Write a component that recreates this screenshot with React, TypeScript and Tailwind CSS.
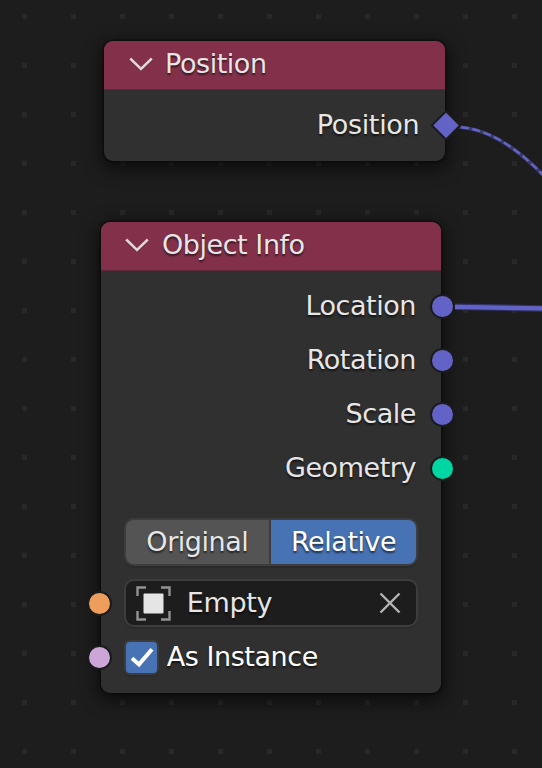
import type { ReactNode } from "react";

const TEXT_SHADOW = "[text-shadow:0_2px_2px_rgba(0,0,0,0.6)]";

function Chevron() {
  return (
    <svg width="24" height="14" viewBox="0 0 24 14" fill="none" className="shrink-0">
      <path d="M1.2 2.2 L12 12.8 L22.8 2.2" stroke="#000" strokeOpacity="0.15" strokeWidth="3.4" />
      <path d="M1.2 1.5 L12 12 L22.8 1.5" stroke="#e0d5d9" strokeWidth="2.5" />
    </svg>
  );
}

function NodeHeader({ title, inset }: { title: string; inset: string }) {
  return (
    <header className={`flex h-[48.5px] items-center rounded-t-[9px] border-b border-[#5a2638] bg-[#83314a] pb-px ${inset}`}>
      <Chevron />
      <h2 className={`whitespace-pre ${TEXT_SHADOW}`}>{title}</h2>
    </header>
  );
}

function Node({ className, children }: { className: string; children: ReactNode }) {
  return (
    <section
      className={`absolute rounded-[9px] bg-[#303030] shadow-[0_0_0_1.5px_rgba(10,10,10,0.55),0_5px_17px_3px_rgba(0,0,0,0.6)] ${className}`}
    >
      {children}
    </section>
  );
}

function Socket({ className }: { className: string }) {
  return <span className={`absolute size-[25px] rounded-full border-2 border-[#1b1b1b] ${className}`} />;
}

function Output({ label, color }: { label: string; color: string }) {
  return (
    <div className="relative flex h-[54px] items-center justify-end pr-[25.4px]">
      <span className={TEXT_SHADOW}>{label}</span>
      <Socket className={`-right-[13.5px] top-[15px] ${color}`} />
    </div>
  );
}

export default function App() {
  return (
    <main className="relative h-[768px] w-[542px] overflow-hidden bg-[#1d1d1d] font-['DejaVu_Sans',sans-serif] text-[27px] leading-[32px] tracking-[-0.45px] text-[#e6e6e6]">
      <svg className="absolute inset-0" width="542" height="768">
        <defs>
          <pattern id="grid" x="22" y="14" width="49" height="49" patternUnits="userSpaceOnUse">
            <rect width="5" height="5" fill="#282828" />
          </pattern>
        </defs>
        <rect width="542" height="768" fill="url(#grid)" />
      </svg>

      <Node className="left-[104.4px] top-[41px] h-[120px] w-[340.6px]">
        <NodeHeader title="Position" inset="gap-[12.2px] pl-[24.5px]" />
        <div className="flex h-[70px] items-center justify-end pr-[25.6px]">
          <span className={`tracking-[-0.3px] ${TEXT_SHADOW}`}>Position</span>
        </div>
      </Node>

      <Node className="left-[101px] top-[222px] h-[470.5px] w-[340.4px]">
        <NodeHeader title="Object Info" inset="gap-[13px] pl-[24px]" />
        <div className="pt-[8px]">
          <Output label="Location" color="bg-[#6363c7]" />
          <Output label="Rotation" color="bg-[#6363c7]" />
          <Output label="Scale" color="bg-[#6363c7]" />
          <Output label="Geometry" color="bg-[#00d6a3]" />
        </div>
        <div className="flex flex-col pl-[23.4px] pr-[23.5px] pt-[23.5px]">
          <div className="flex h-[48px] overflow-hidden rounded-[10px] border-2 border-[#3d3d3d] bg-[#3d3d3d] shadow-[0_2px_0_rgba(0,0,0,0.1)]">
            <button className={`w-[143px] bg-[#545454] pb-px pr-px ${TEXT_SHADOW}`}>Original</button>
            <button className={`ml-[2px] flex-1 bg-[#4772b3] pb-px text-white ${TEXT_SHADOW}`}>Relative</button>
          </div>
          <div className="relative mt-[13px] flex h-[48px] items-center rounded-[10px] border-2 border-[#3d3d3d] bg-[#1d1d1d] pl-[9.5px] pr-[15px] shadow-[0_2px_0_rgba(0,0,0,0.1)]">
            <svg width="35" height="35" viewBox="0 0 35 35" fill="none">
              <path d="M1.5 10V1.5H10M25 1.5H33.5V10M33.5 25V33.5H25M10 33.5H1.5V25" stroke="#939393" strokeWidth="2.4" />
              <rect x="7.5" y="7.5" width="20" height="20" rx="1" fill="#e5e5e5" />
            </svg>
            <span className={`ml-[15.8px] flex-1 tracking-[-0.3px] ${TEXT_SHADOW}`}>Empty</span>
            <svg width="22" height="22" viewBox="0 0 22 22" fill="none">
              <path d="M1.5 1.5L20.5 20.5M20.5 1.5L1.5 20.5" stroke="#b4b4b4" strokeWidth="2.4" />
            </svg>
            <Socket className="-left-[39.3px] top-[9.5px] bg-[#ed9e5c]" />
          </div>
          <div className="relative mt-[12.5px] flex h-[35px] items-center gap-[7.4px]">
            <span className="flex size-[35px] items-center justify-center rounded-[6px] border-2 border-[#3d3d3d] bg-[#4772b3] shadow-[0_2px_0_rgba(0,0,0,0.1)]">
              <svg width="31" height="31" viewBox="0 0 31 31" fill="none" className="shrink-0">
                <path d="M6 16.2L13 22.4L26 7.2" stroke="white" strokeWidth="4" />
              </svg>
            </span>
            <span className={`text-white ${TEXT_SHADOW}`}>As Instance</span>
            <Socket className="-left-[37.3px] top-[5px] bg-[#cca6d6]" />
          </div>
        </div>
      </Node>

      <svg className="absolute inset-0" width="542" height="768" fill="none">
        <path d="M455 306.8L542 308.4" stroke="#34346a" strokeWidth="6.5" />
        <path d="M455 306.8L542 308.4" stroke="#6363c7" strokeWidth="4.2" />
        <path d="M459 127C486 129 514 145 543 175" stroke="#3b3b69" strokeWidth="3.6" />
        <path d="M461 127.2C487 129.5 514 145 543 175" stroke="#6363c7" strokeWidth="2.4" strokeDasharray="8 3.5" />
        <path d="M446 111.3L460.1 125.4L446 139.5L431.9 125.4Z" fill="#6363c7" stroke="#1b1b1b" strokeWidth="2" />
      </svg>
    </main>
  );
}
